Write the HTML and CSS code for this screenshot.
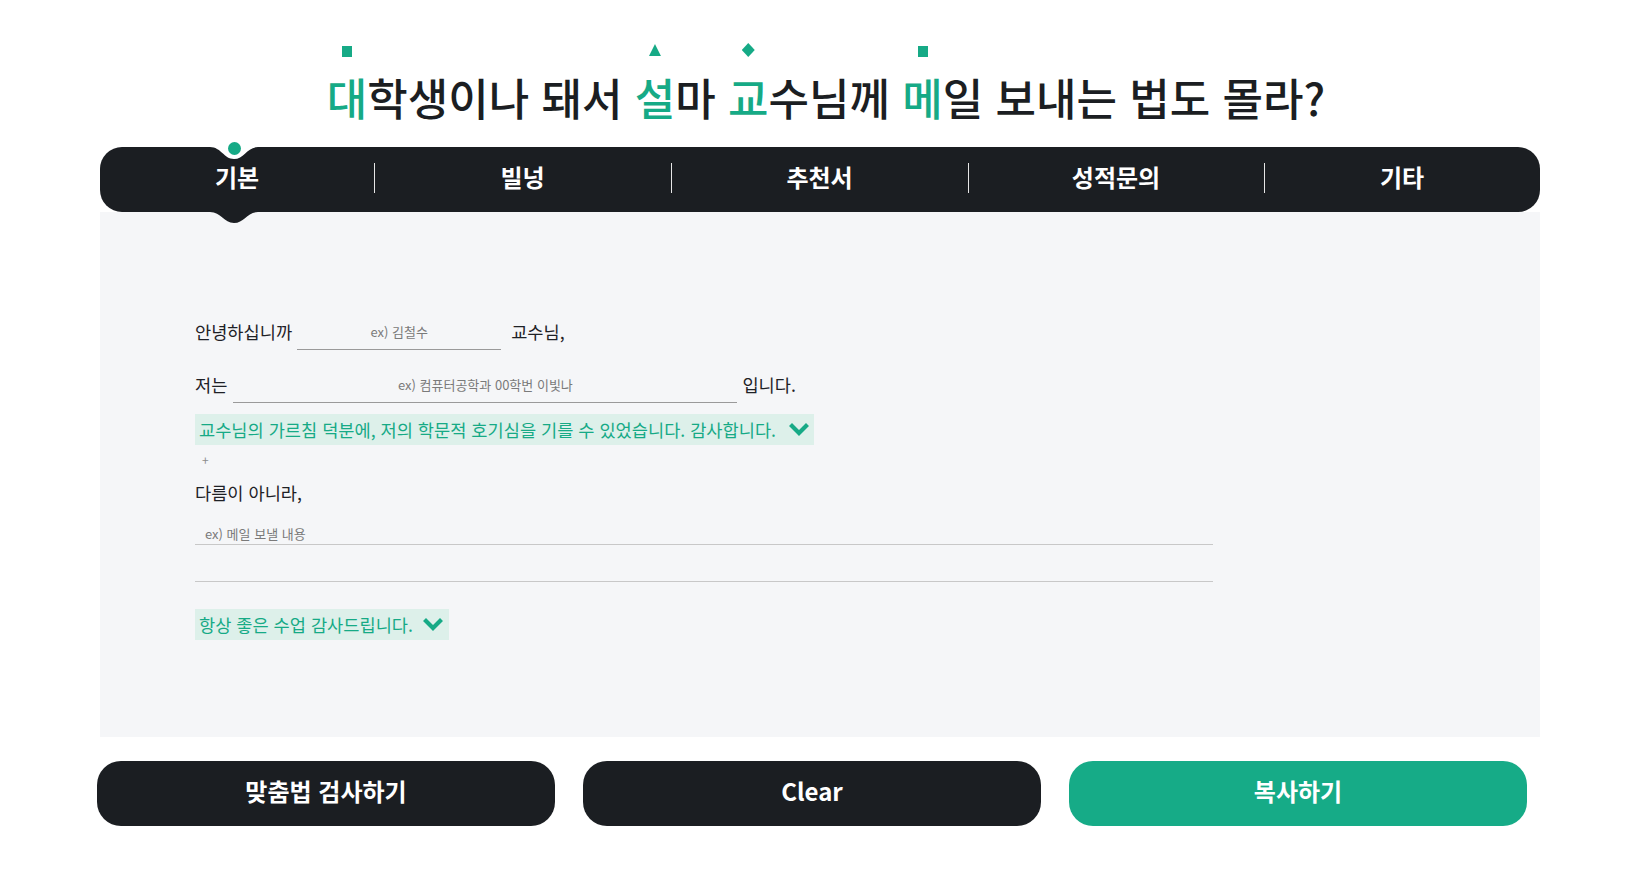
FILE: index.html
```html
<!DOCTYPE html>
<html lang="ko">
<head>
<meta charset="utf-8">
<title>메일 작성</title>
<link rel="stylesheet" href="styles.css">
</head>
<body>
<div class="page">
  <h1 class="title"><span class="mark sq">대</span>학생이나 돼서 <span class="mark tri">설</span>마 <span class="mark dia">교</span>수님께 <span class="mark sq">메</span>일 보내는 법도 몰라?</h1>

  <nav class="tabs">
    <div class="tab active">
      <svg class="notch" viewBox="0 0 48 13" width="48" height="13"><path d="M0 0 C11 0 14 12 24 12 C34 12 37 0 48 0 Z" fill="#fff"/></svg>
      <span class="dot"></span>
      <span class="label">기본</span>
      <svg class="bump" viewBox="0 0 48 11" width="48" height="11"><path d="M0 0 C11 0 14 11 24 11 C34 11 37 0 48 0 Z" fill="#1b1e22"/></svg>
    </div>
    <div class="tab"><span class="label">빌넝</span></div>
    <div class="tab"><span class="label">추천서</span></div>
    <div class="tab"><span class="label">성적문의</span></div>
    <div class="tab"><span class="label">기타</span></div>
  </nav>

  <section class="panel">
    <div class="row row-first">
      <span class="txt">안녕하십니까</span>
      <input class="line-input name" type="text" placeholder="ex) 김철수">
      <span class="txt after-name">교수님,</span>
    </div>
    <div class="row">
      <span class="txt">저는</span>
      <input class="line-input major" type="text" placeholder="ex) 컴퓨터공학과 00학번 이빛나">
      <span class="txt">입니다.</span>
    </div>
    <div class="pick pick-first">
      <span>교수님의 가르침 덕분에, 저의 학문적 호기심을 기를 수 있었습니다. 감사합니다.</span>
      <svg class="chev" viewBox="0 0 20 14" width="20" height="14"><path d="M3 3 L10 10 L17 3" fill="none" stroke="#16aa86" stroke-width="4.2" stroke-linecap="square"/></svg>
    </div>
    <div class="plus">+</div>
    <div class="txt greet">다름이 아니라,</div>
    <input class="line-input body" type="text" placeholder="ex) 메일 보낼 내용">
    <div class="extra-line"></div>
    <div class="pick pick-last">
      <span>항상 좋은 수업 감사드립니다.</span>
      <svg class="chev" viewBox="0 0 20 14" width="20" height="14"><path d="M3 3 L10 10 L17 3" fill="none" stroke="#16aa86" stroke-width="4.2" stroke-linecap="square"/></svg>
    </div>
  </section>

  <div class="actions">
    <button class="btn dark">맞춤법 검사하기</button>
    <button class="btn dark">Clear</button>
    <button class="btn green">복사하기</button>
  </div>
</div>
</body>
</html>
```

FILE: styles.css
```css
* { box-sizing: border-box; }

body {
  margin: 0;
  background: #ffffff;
  font-family: "Noto Sans CJK KR", "Noto Sans", sans-serif;
  color: #1b1e22;
}

.page {
  width: 1440px;
  margin-left: 100px;
  padding-top: 72px;
}

.title {
  margin: 0;
  padding-left: 12px;
  text-align: center;
  font-size: 44px;
  line-height: 50px;
  font-weight: 500;
  color: #1b1e22;
}

.mark {
  position: relative;
  display: inline-block;
  color: #16aa86;
}

.mark::before {
  content: "";
  position: absolute;
  left: 50%;
  background: #16aa86;
}

.mark.sq::before {
  top: -26px;
  width: 10px;
  height: 11px;
  margin-left: -5px;
}

.mark.tri::before {
  top: -28px;
  width: 12px;
  height: 12px;
  margin-left: -6px;
  clip-path: polygon(50% 0, 100% 100%, 0 100%);
}

.mark.dia::before {
  top: -29px;
  width: 13px;
  height: 14px;
  margin-left: -6.5px;
  clip-path: polygon(50% 0, 100% 50%, 50% 100%, 0 50%);
}

/* tabs */
.tabs {
  margin-top: 25px;
  height: 65px;
  background: #1b1e22;
  border-radius: 22px;
  display: grid;
  grid-template-columns: 274px 297px 297px 296px 1fr;
}

.tab {
  position: relative;
  display: flex;
  align-items: center;
  justify-content: center;
  color: #ffffff;
  font-size: 24px;
  font-weight: 700;
}

.tab + .tab::before {
  content: "";
  position: absolute;
  left: 0;
  top: 16px;
  width: 1px;
  height: 30px;
  background: #e6e6e6;
}

.tab .label {
  position: relative;
  top: -3px;
}

.notch {
  position: absolute;
  top: 0;
  left: calc(50% - 27px);
  display: block;
}

.dot {
  position: absolute;
  top: -5px;
  left: calc(50% - 9.5px);
  width: 13px;
  height: 13px;
  border-radius: 50%;
  background: #16aa86;
}

.bump {
  position: absolute;
  top: 65px;
  left: calc(50% - 27px);
  display: block;
}

/* panel */
.panel {
  background: #f5f6f8;
  height: 525px;
  padding: 101px 0 0 95px;
  display: flex;
  flex-direction: column;
  align-items: flex-start;
}

.row {
  display: flex;
  align-items: center;
  height: 37px;
}

.row + .row {
  margin-top: 16px;
}

.txt {
  font-size: 17.6px;
  color: #1e2126;
  line-height: 26px;
}

.line-input {
  font-family: "Noto Sans CJK KR", "Noto Sans", sans-serif;
  background: transparent;
  border: none;
  border-bottom: 1px solid #9a9a9a;
  outline: none;
  font-size: 13px;
  color: #333;
  padding: 0;
}

.line-input::placeholder {
  color: #7a7a7a;
}

.line-input.name {
  width: 204px;
  height: 37px;
  margin: 0 10px 0 5px;
  text-align: center;
}

.line-input.major {
  width: 504px;
  height: 37px;
  margin: 0 5px 0 6px;
  text-align: center;
}

.pick {
  display: inline-flex;
  align-items: center;
  height: 31px;
  background: #ddf0ea;
  color: #16aa86;
  font-size: 17.6px;
  padding: 0 5px 0 4px;
}

.pick-first {
  margin-top: 11px;
  width: 619px;
  justify-content: space-between;
}

.pick .chev {
  display: block;
  margin-left: 10px;
}

.plus {
  margin: 7px 0 0 7px;
  font-size: 12px;
  line-height: 16px;
  color: #8c8c8c;
}

.greet {
  margin-top: 12px;
}

.line-input.body {
  margin-top: 17px;
  width: 1018px;
  height: 22px;
  padding-left: 10px;
  border-bottom-color: #c8c8c8;
  text-align: left;
}

.extra-line {
  width: 1018px;
  height: 37px;
  border-bottom: 1px solid #c8c8c8;
}

.pick-last {
  margin-top: 27px;
  width: 254px;
}

/* buttons */
.actions {
  margin: 24px 0 0 -3px;
  width: 1430px;
  display: flex;
  gap: 28px;
}

.btn {
  flex: 1;
  height: 65px;
  border: none;
  border-radius: 24px;
  color: #ffffff;
  font-family: "Noto Sans CJK KR", "Noto Sans", sans-serif;
  font-size: 24px;
  font-weight: 700;
  padding: 0 0 7px;
  cursor: pointer;
}

.btn.dark { background: #1b1e22; }
.btn.green { background: #16ab87; }
```
